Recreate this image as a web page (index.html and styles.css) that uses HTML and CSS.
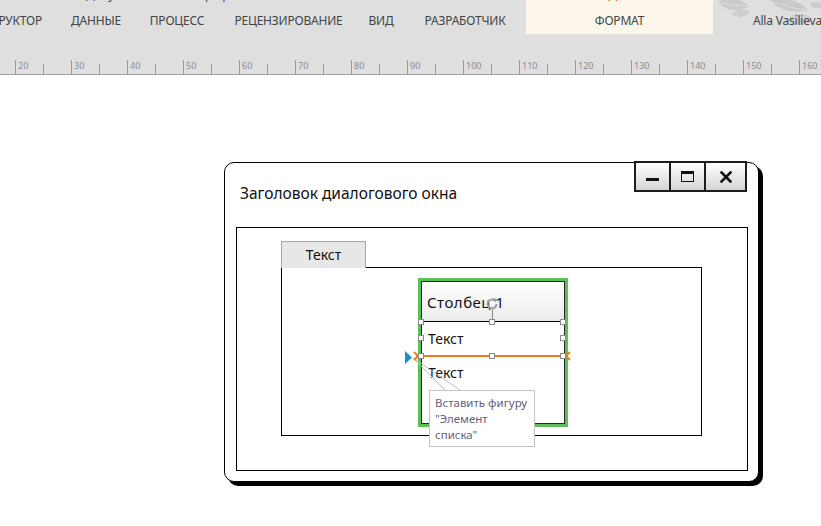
FILE: index.html
```html
<!DOCTYPE html>
<html lang="ru">
<head>
<meta charset="utf-8">
<title>Visio</title>
<link rel="stylesheet" href="styles.css">
</head>
<body>
<header class="ribbon">
  <div class="topbar">
    <div class="caption"><span>Документ1 — Visio профессиональный</span></div>
    <svg class="leaves" width="110" height="34" viewBox="0 0 110 34">
      <path d="M6 2 C14 -4 30 -2 36 6 C28 12 14 12 6 2 Z" fill="#cbcbcb"/>
      <path d="M8 3 C18 5 26 6 35 6" stroke="#dedede" stroke-width="1" fill="none"/>
      <path d="M20 14 C24 8 34 8 38 12 C34 18 24 19 20 14 Z" fill="#cfcfcf"/>
      <path d="M58 0 C66 10 82 14 96 10 C90 2 72 -4 58 0 Z" fill="#c9c9c9"/>
      <path d="M60 1 C72 6 84 9 95 10" stroke="#dedede" stroke-width="1" fill="none"/>
      <path d="M74 20 C80 12 94 12 100 18 C94 26 80 26 74 20 Z" fill="#d0d0d0"/>
      <path d="M98 4 C104 0 110 2 112 6 C106 10 100 8 98 4 Z" fill="#cccccc"/>
    </svg>
    <nav class="tabs">
      <div class="tab tab-cut">КОНСТРУКТОР</div>
      <div class="tab t-data">ДАННЫЕ</div>
      <div class="tab t-proc">ПРОЦЕСС</div>
      <div class="tab t-rev">РЕЦЕНЗИРОВАНИЕ</div>
      <div class="tab t-view">ВИД</div>
      <div class="tab t-dev">РАЗРАБОТЧИК</div>
      <div class="context">
        <div class="context-label"><span>ИНСТРУМЕНТЫ ДЛЯ КОНТЕЙНЕРОВ</span></div>
        <div class="tab context-tab">ФОРМАТ</div>
      </div>
      <div class="tab user">Alla Vasilieva</div>
    </nav>
  </div>
  <div class="ruler">
    <div class="rc">20</div><div class="rc">30</div><div class="rc">40</div><div class="rc">50</div>
    <div class="rc">60</div><div class="rc">70</div><div class="rc">80</div><div class="rc">90</div>
    <div class="rc">100</div><div class="rc">110</div><div class="rc">120</div><div class="rc">130</div>
    <div class="rc">140</div><div class="rc">150</div><div class="rc">160</div>
  </div>
</header>

<main class="canvas">
  <div class="dialog">
    <div class="winbtns">
      <div class="wb wb-min"><span class="ico-min"></span></div>
      <div class="wb wb-max"><span class="ico-max"></span></div>
      <div class="wb wb-close">
        <svg width="12" height="12" viewBox="0 0 12 12"><path d="M1.5 1.5 L10.5 10.5 M10.5 1.5 L1.5 10.5" stroke="#111" stroke-width="2.6" stroke-linecap="square"/></svg>
      </div>
    </div>
    <div class="dialog-title">Заголовок диалогового окна</div>
    <div class="frame">
      <div class="tabhead">Текст</div>
      <div class="panel">
        <div class="listbox">
          <div class="listcol">
            <div class="colhead">Столбец 1</div>
            <div class="row">Текст</div>
            <div class="row">Текст</div>
          </div>
          <svg class="insert" width="175" height="50" viewBox="0 0 175 50">
            <path d="M12 12 L44 44 M12 12 L59 44" stroke="#bdbdbd" stroke-width="1" fill="none"/>
            <path d="M4 5 L11 11.5 L4 18 Z" fill="#1b8ec9"/>
            <path d="M15 10 L166 10" stroke="#f47a20" stroke-width="2"/>
            <path d="M13 6 L17 10 L13 14 M169 6 L165 10 L169 14" stroke="#f47a20" stroke-width="2" fill="none"/>
          </svg>
          <svg class="rotate" width="14" height="14" viewBox="0 0 14 14">
            <path d="M11.5 7 A4.5 4.5 0 1 1 9.5 3.2" stroke="#9a9a9a" stroke-width="2" fill="none"/>
            <path d="M8 1 L12.5 2 L10 5.5 Z" fill="#9a9a9a"/>
          </svg>
          <span class="rotline"></span>
          <span class="h h-tl"></span><span class="h h-tc"></span><span class="h h-tr"></span>
          <span class="h h-ml"></span><span class="h h-mr"></span>
          <span class="h h-bl"></span><span class="h h-bc"></span><span class="h h-br"></span>
          <div class="tooltip">Вставить фигуру<br>"Элемент<br>списка"</div>
        </div>
      </div>
    </div>
  </div>
</main>
</body>
</html>
```

FILE: styles.css
```css
* { box-sizing: border-box; }

html, body {
  margin: 0;
  padding: 0;
  background: #ffffff;
  overflow: hidden;
}

body {
  width: 821px;
  height: 526px;
  font-family: "Noto Sans", "Open Sans", sans-serif;
  color: #444444;
}

/* ---------- Ribbon ---------- */
.ribbon {
  background: #dfdfdf;
  border-bottom: 1px solid #a3a3a3;
}

.topbar {
  display: grid;
  height: 34px;
}

.caption,
.tabs,
.leaves {
  grid-area: 1 / 1;
}

.caption {
  height: 3px;
  overflow: hidden;
  display: flex;
  align-items: flex-end;
  padding-left: 86px;
  font-size: 12px;
  line-height: 16px;
  color: #444;
  white-space: nowrap;
}

.leaves {
  justify-self: end;
  align-self: start;
}

.tabs {
  display: flex;
  align-items: flex-end;
  height: 34px;
  font-size: 12px;
  letter-spacing: -0.2px;
  white-space: nowrap;
}

.tab {
  line-height: 16px;
  padding-bottom: 5px;
  text-align: center;
  color: #444444;
}

.tab-cut {
  width: 57px;
  display: flex;
  justify-content: flex-end;
  padding-right: 15px;
}

.t-data { width: 78px; }
.t-proc { width: 84px; }
.t-rev  { width: 139px; }
.t-view { width: 46px; }
.t-dev  { width: 122px; }

.context {
  width: 187px;
  height: 34px;
  background: #fdf6ea;
  display: flex;
  flex-direction: column;
  justify-content: space-between;
}

.context-label {
  height: 3px;
  overflow: hidden;
  display: flex;
  align-items: flex-end;
  justify-content: center;
  font-size: 12px;
  line-height: 16px;
  color: #d24726;
}

.user {
  margin-left: 40px;
  text-align: left;
}

/* ---------- Ruler ---------- */
.ruler {
  margin-top: 26px;
  height: 14px;
  display: flex;
  padding-left: 15px;
  overflow: hidden;
}

.rc {
  flex: 0 0 56px;
  position: relative;
  border-left: 1px solid #9c9c9c;
  padding-left: 2px;
  font-size: 9px;
  line-height: 12px;
  color: #8a8a96;
}

.rc::after {
  content: "";
  position: absolute;
  left: 27px;
  bottom: 0;
  width: 1px;
  height: 10px;
  background: #9c9c9c;
}

/* ---------- Canvas / dialog ---------- */
.canvas {
  padding: 87px 0 0 224px;
}

.dialog {
  position: relative;
  width: 535px;
  height: 320px;
  border: 1px solid #000;
  border-radius: 10px;
  box-shadow: 4px 4px 0 #000;
  background: #fff;
  color: #111;
}

.winbtns {
  position: absolute;
  top: -2px;
  left: 409px;
  display: flex;
  height: 31px;
  border: 2px solid #1c1c1c;
  background: #1c1c1c;
  gap: 2px;
}

.wb {
  width: 33px;
  display: flex;
  align-items: center;
  justify-content: center;
  background: linear-gradient(#ffffff, #d4d4d4);
}

.wb-close { width: 39px; }

.ico-min {
  width: 13px;
  height: 3px;
  margin-top: 5px;
  background: #111;
}

.ico-max {
  width: 13px;
  height: 11px;
  border: 1.5px solid #111;
  border-top-width: 3px;
}

.dialog-title {
  height: 64px;
  padding: 20px 0 0 15px;
  font-size: 15.5px;
  line-height: 20px;
  color: #111;
}

.frame {
  height: 244px;
  margin: 0 10px 0 11px;
  border: 1px solid #000;
  padding: 13px 0 0 44px;
}

.tabhead {
  position: relative;
  z-index: 1;
  width: 85px;
  height: 27px;
  margin-bottom: -1px;
  border: 1px solid #a8a8a8;
  border-bottom: none;
  background: #e7e7e7;
  text-align: center;
  font-size: 14px;
  line-height: 25px;
  color: #111;
}

.panel {
  width: 421px;
  height: 169px;
  border: 1px solid #000;
  padding: 10px 0 0 136px;
}

.listbox {
  position: relative;
  width: 150px;
  height: 149px;
  border: 3px solid #5cbf5a;
}

.listcol {
  height: 100%;
  border: 1px solid #262626;
  background: #fff;
}

.colhead {
  height: 40px;
  border-bottom: 1px solid #000;
  background: linear-gradient(#ffffff, #ebebeb);
  padding-left: 5px;
  font-size: 15px;
  letter-spacing: 0.5px;
  line-height: 40px;
  color: #111;
}

.row {
  height: 34px;
  padding-left: 6px;
  font-size: 14px;
  line-height: 34px;
  color: #111;
}

/* overlays on the selected shape */
.insert {
  position: absolute;
  left: -20px;
  top: 65px;
}

.rotate {
  position: absolute;
  left: 64px;
  top: 16px;
}

.rotline {
  position: absolute;
  left: 71px;
  top: 29px;
  width: 1px;
  height: 10px;
  background: #8c8c8c;
}

.h {
  position: absolute;
  width: 6px;
  height: 6px;
  border: 1px solid #8a8a8a;
  background: #fff;
}

.h-tl { left: -3px;  top: 38px; }
.h-tc { left: 68px;  top: 38px; }
.h-tr { left: 139px; top: 38px; }
.h-ml { left: -3px;  top: 54px; }
.h-mr { left: 139px; top: 54px; }
.h-bl { left: -3px;  top: 72px; }
.h-bc { left: 68px;  top: 72px; }
.h-br { left: 139px; top: 72px; }

.tooltip {
  position: absolute;
  left: 8px;
  top: 109px;
  width: 106px;
  height: 57px;
  border: 1px solid #c4c4c4;
  background: #fff;
  padding: 4px 0 0 5px;
  font-size: 11.5px;
  line-height: 16px;
  color: #6a5d74;
  white-space: nowrap;
}
```
